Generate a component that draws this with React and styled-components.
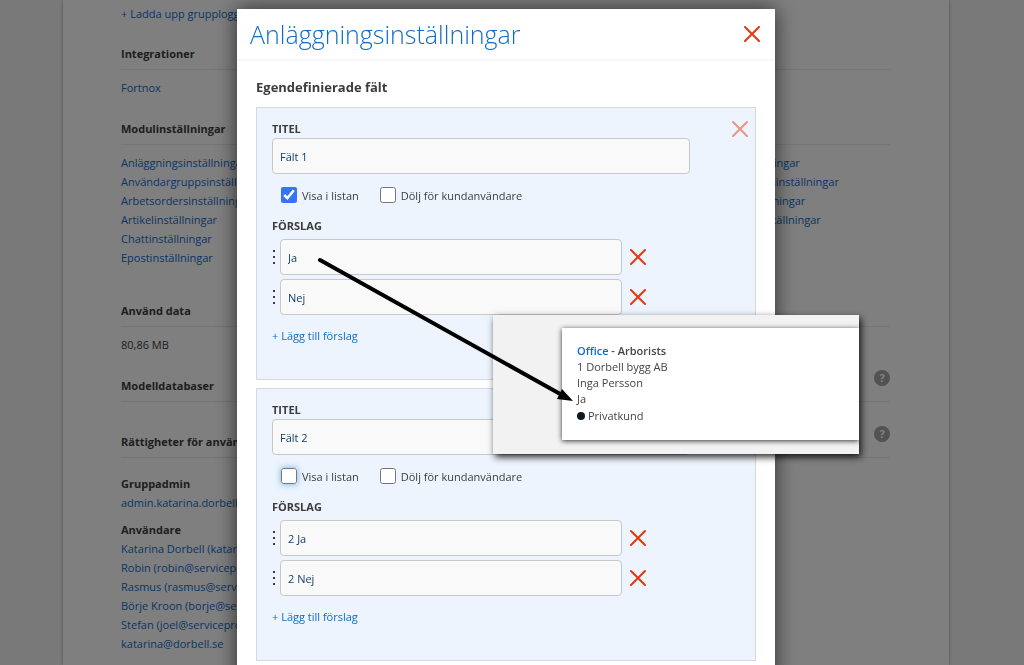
import React from "react";
import styled, { createGlobalStyle } from "styled-components";

const GlobalStyle = createGlobalStyle`
  *, *::before, *::after { box-sizing: border-box; }
  body {
    margin: 0;
    background: #f2f2f2;
    color: #3c3c3c;
    font: 11px/19px "Open Sans", "Noto Sans", sans-serif;
  }
  h1, h2, h3, h4, p, ul { margin: 0; padding: 0; font-size: inherit; }
  ul { list-style: none; }
  button, input { font: inherit; }
`;

const Page = styled.div`
  display: flex;
  justify-content: center;
  height: 100vh;
  padding-right: 12px;
  overflow: hidden;
`;

const Sheet = styled.main`
  width: 88%;
  max-width: 886px;
  min-height: 100%;
  padding: 4px 59px 0 58px;
  background: #fff;
  box-shadow: 0 0 3px rgba(0, 0, 0, 0.35);
`;

const Link = styled.a`
  color: #0f6cc8;
  text-decoration: none;
`;

const Section = styled.section`
  margin-top: 15px;
`;

const SectionHead = styled.header`
  display: flex;
  justify-content: space-between;
  align-items: flex-end;
  height: 32px;
  padding-bottom: 6px;
  border-bottom: 1px solid #ebebeb;
`;

const SectionBody = styled.div`
  padding: 8px 0 ${(p) => (p.$roomy ? "13px" : "1px")};
`;

const HelpButton = styled.button`
  align-self: flex-start;
  width: 16px;
  height: 16px;
  padding: 0;
  border: 0;
  border-radius: 50%;
  background: #a4a4a4;
  color: #fff;
  font-weight: 700;
  line-height: 16px;
`;

const Columns = styled.div`
  display: grid;
  grid-template-columns: repeat(4, 1fr);
  white-space: nowrap;
`;

const UserGroup = styled.div`
  padding-top: 8px;
`;

const Overlay = styled.div`
  position: fixed;
  inset: 0;
  display: flex;
  justify-content: center;
  align-items: flex-start;
  padding: 9px 12px 0 0;
  background: rgba(0, 0, 0, 0.5);
  overflow: hidden;
`;

const Dialog = styled.div`
  position: relative;
  width: 538px;
  background: #fff;
  box-shadow: 0 0 20px rgba(0, 0, 0, 0.65);
`;

const DialogHead = styled.header`
  display: flex;
  justify-content: space-between;
  align-items: center;
  height: 52px;
  padding: 0 15px 0 13px;
  border-bottom: 2px solid #f8f8f8;
`;

const DialogTitle = styled.h1`
  color: #0f6cc8;
  font-size: 25px;
  font-weight: 300;
  line-height: 34px;
`;

const DialogBody = styled.div`
  display: flex;
  flex-direction: column;
  gap: 8px;
  padding: 16px 19px 24px;
`;

const BodyTitle = styled.h2`
  margin-bottom: 2px;
  font-size: 13px;
  line-height: 20px;
`;

const IconButton = styled.button`
  display: block;
  flex: none;
  width: 16px;
  height: 16px;
  padding: 0;
  border: 0;
  background: none;
  color: #e8360c;
  opacity: ${(p) => (p.$faded ? 0.5 : 1)};

  svg { display: block; }
`;

const FieldBox = styled.section`
  display: flex;
  align-items: flex-start;
  gap: 42px;
  padding: 11px 7px 34px 15px;
  border: 1px solid #d5d9dd;
  background: #edf4fd;

  > ${IconButton} { margin-top: 2px; }
`;

const FieldMain = styled.div`
  flex: 1;
  min-width: 0;
`;

const Caption = styled.label`
  display: block;
  font-weight: 700;
  text-transform: uppercase;
`;

const TextInput = styled.input`
  display: block;
  flex: 1;
  width: 100%;
  min-width: 0;
  height: 36px;
  padding: 0 7px;
  border: 1px solid #c8c8c8;
  border-radius: 4px;
  background: #f9f9f9;
  color: #123f6b;
`;

const Checks = styled.div`
  display: flex;
  align-items: center;
  gap: 21px;
  height: 20px;
  margin: 11px 0 11px 9px;
`;

const Check = styled.label`
  display: flex;
  align-items: center;
  gap: 5px;
`;

const CheckInput = styled.input`
  width: 16px;
  height: 16px;
  margin: 0;
  border-radius: 3px;
  accent-color: #3374fb;
  box-shadow: ${(p) => (p.$glow ? "0 0 6px rgba(74, 154, 232, 0.8)" : "none")};
`;

const Suggestions = styled.ul`
  display: flex;
  flex-direction: column;
  gap: 4px;
  margin: 4px 0 11px;
`;

const Suggestion = styled.li`
  display: flex;
  align-items: center;
  padding-right: 44px;

  ${IconButton} { margin-left: 8px; }
`;

const Grip = styled.svg`
  flex: none;
  width: 8px;
  height: 16px;
  fill: #3c3c3c;
`;

const CalloutFrame = styled.div`
  position: absolute;
  top: 306px;
  left: 256px;
  width: 366px;
  box-shadow: 2px 3px 7px rgba(0, 0, 0, 0.85);
`;

const Callout = styled.aside`
  padding: 13px 0 14px 69px;
  overflow: hidden;
  background: #f2f2f2;
`;

const Card = styled.div`
  padding: 15px 15px 16px;
  background: #fff;
  box-shadow: 0 1px 5px rgba(0, 0, 0, 0.8);
  color: #444;
  line-height: 16px;

  h3 { font-weight: 600; }
`;

const Tag = styled.p`
  display: flex;
  align-items: center;
  gap: 3px;
  margin-top: 1px;

  &::before {
    content: "";
    width: 8px;
    height: 8px;
    border-radius: 50%;
    background: #0b1a20;
  }
`;

const Arrow = styled.svg`
  position: absolute;
  top: 241px;
  left: 73px;
  width: 273px;
  height: 160px;
  pointer-events: none;
`;

function Cross({ label, faded }) {
  return (
    <IconButton type="button" aria-label={label} $faded={faded}>
      <svg width="16" height="16" viewBox="0 0 16 16" fill="none" stroke="currentColor" strokeWidth="2" strokeLinecap="round">
        <path d="M1 1 15 15M15 1 1 15" />
      </svg>
    </IconButton>
  );
}

function SettingsSection({ title, help, roomy, children }) {
  return (
    <Section>
      <SectionHead>
        <h2>{title}</h2>
        {help && <HelpButton type="button" aria-label={`Hjälp: ${title}`}>?</HelpButton>}
      </SectionHead>
      <SectionBody $roomy={roomy}>{children}</SectionBody>
    </Section>
  );
}

function LinkList({ items }) {
  return (
    <ul>
      {items.map((item) => (
        <li key={item}><Link href="#">{item}</Link></li>
      ))}
    </ul>
  );
}

function CustomField({ id, title, visible, glow, suggestions }) {
  return (
    <FieldBox>
      <FieldMain>
        <Caption htmlFor={`${id}-title`}>Titel</Caption>
        <TextInput id={`${id}-title`} defaultValue={title} />
        <Checks>
          <Check>
            <CheckInput type="checkbox" defaultChecked={visible} $glow={glow} />
            Visa i listan
          </Check>
          <Check>
            <CheckInput type="checkbox" />
            Dölj för kundanvändare
          </Check>
        </Checks>
        <Caption htmlFor={`${id}-s0`}>Förslag</Caption>
        <Suggestions>
          {suggestions.map((text, i) => (
            <Suggestion key={text}>
              <Grip viewBox="0 0 8 16" aria-hidden="true">
                <rect x="1" y="1" width="2" height="2" />
                <rect x="1" y="7" width="2" height="2" />
                <rect x="1" y="13" width="2" height="2" />
              </Grip>
              <TextInput id={`${id}-s${i}`} aria-label={`Förslag ${i + 1}`} defaultValue={text} />
              <Cross label="Ta bort förslag" />
            </Suggestion>
          ))}
        </Suggestions>
        <Link href="#">+ Lägg till förslag</Link>
      </FieldMain>
      <Cross label="Ta bort fält" faded />
    </FieldBox>
  );
}

const modulesLeft = [
  "Anläggningsinställningar",
  "Användargruppsinställningar",
  "Arbetsordersinställningar",
  "Artikelinställningar",
  "Chattinställningar",
  "Epostinställningar",
];
const modulesRight = [
  "Fakturainställningar",
  "Kontrollobjektsinställningar",
  "Kontraktinställningar",
  "Tidrapportsinställningar",
];
const users = [
  "Katarina Dorbell (katarina@dorbell.se)",
  "Robin (robin@servicepro.se)",
  "Rasmus (rasmus@servicepro.se)",
  "Börje Kroon (borje@servicepro.se)",
  "Stefan (joel@servicepro.se)",
  "katarina@dorbell.se",
];

export default function App() {
  return (
    <>
      <GlobalStyle />
      <Page>
        <Sheet>
          <p><Link href="#">+ Ladda upp grupplogga</Link></p>
          <SettingsSection title="Integrationer">
            <Link href="#">Fortnox</Link>
          </SettingsSection>
          <SettingsSection title="Modulinställningar" roomy>
            <Columns>
              <LinkList items={modulesLeft} />
              <div />
              <div />
              <LinkList items={modulesRight} />
            </Columns>
          </SettingsSection>
          <SettingsSection title="Använd data">80,86 MB</SettingsSection>
          <SettingsSection title="Modelldatabaser" help />
          <SettingsSection title="Rättigheter för användare" help>
            <UserGroup>
              <h3>Gruppadmin</h3>
              <LinkList items={["admin.katarina.dorbell@dorbell.se"]} />
            </UserGroup>
            <UserGroup>
              <h3>Användare</h3>
              <LinkList items={users} />
            </UserGroup>
          </SettingsSection>
        </Sheet>
      </Page>
      <Overlay>
        <Dialog role="dialog" aria-labelledby="dialog-title">
          <DialogHead>
            <DialogTitle id="dialog-title">Anläggningsinställningar</DialogTitle>
            <Cross label="Stäng" />
          </DialogHead>
          <DialogBody>
            <BodyTitle>Egendefinierade fält</BodyTitle>
            <CustomField id="f1" title="Fält 1" visible suggestions={["Ja", "Nej"]} />
            <CustomField id="f2" title="Fält 2" glow suggestions={["2 Ja", "2 Nej"]} />
          </DialogBody>
          <CalloutFrame>
            <Callout>
              <Card>
                <h3><Link href="#">Office</Link> - Arborists</h3>
                <p>1 Dorbell bygg AB</p>
                <p>Inga Persson</p>
                <p>Ja</p>
                <Tag>Privatkund</Tag>
              </Card>
            </Callout>
          </CalloutFrame>
          <Arrow viewBox="310 250 273 160" aria-hidden="true">
            <path d="M320 260 562 395" stroke="#000" strokeWidth="4" strokeLinecap="round" />
            <path d="M573 401 562 389 557 399Z" />
          </Arrow>
        </Dialog>
      </Overlay>
    </>
  );
}
